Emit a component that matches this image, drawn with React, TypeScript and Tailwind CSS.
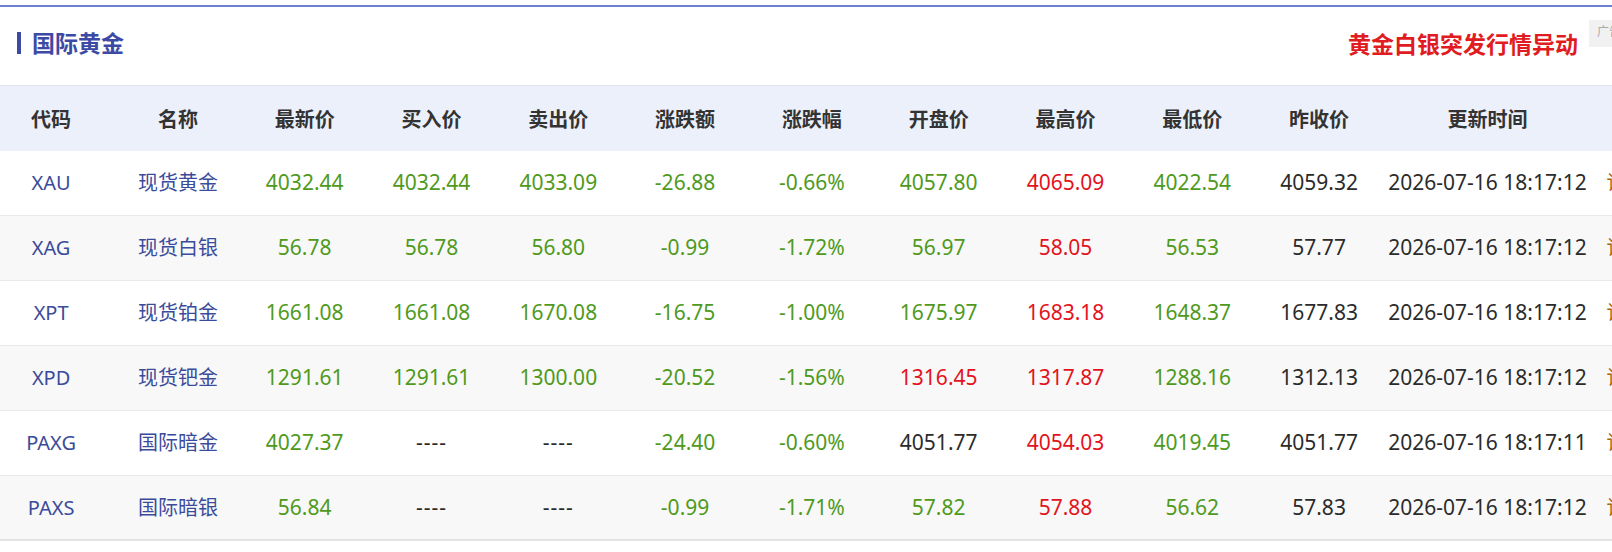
type Tone = "g" | "r" | "k"

type Quote = {
  code: string
  name: string
  cells: [string, Tone][]
  time: string
}

const G: Tone = "g"
const R: Tone = "r"
const K: Tone = "k"

const quotes: Quote[] = [
  {
    code: "XAU",
    name: "现货黄金",
    cells: [["4032.44", G], ["4032.44", G], ["4033.09", G], ["-26.88", G], ["-0.66%", G], ["4057.80", G], ["4065.09", R], ["4022.54", G], ["4059.32", K]],
    time: "2026-07-16 18:17:12",
  },
  {
    code: "XAG",
    name: "现货白银",
    cells: [["56.78", G], ["56.78", G], ["56.80", G], ["-0.99", G], ["-1.72%", G], ["56.97", G], ["58.05", R], ["56.53", G], ["57.77", K]],
    time: "2026-07-16 18:17:12",
  },
  {
    code: "XPT",
    name: "现货铂金",
    cells: [["1661.08", G], ["1661.08", G], ["1670.08", G], ["-16.75", G], ["-1.00%", G], ["1675.97", G], ["1683.18", R], ["1648.37", G], ["1677.83", K]],
    time: "2026-07-16 18:17:12",
  },
  {
    code: "XPD",
    name: "现货钯金",
    cells: [["1291.61", G], ["1291.61", G], ["1300.00", G], ["-20.52", G], ["-1.56%", G], ["1316.45", R], ["1317.87", R], ["1288.16", G], ["1312.13", K]],
    time: "2026-07-16 18:17:12",
  },
  {
    code: "PAXG",
    name: "国际暗金",
    cells: [["4027.37", G], ["----", K], ["----", K], ["-24.40", G], ["-0.60%", G], ["4051.77", K], ["4054.03", R], ["4019.45", G], ["4051.77", K]],
    time: "2026-07-16 18:17:11",
  },
  {
    code: "PAXS",
    name: "国际暗银",
    cells: [["56.84", G], ["----", K], ["----", K], ["-0.99", G], ["-1.71%", G], ["57.82", G], ["57.88", R], ["56.62", G], ["57.83", K]],
    time: "2026-07-16 18:17:12",
  },
]

const heads = ["代码", "名称", "最新价", "买入价", "卖出价", "涨跌额", "涨跌幅", "开盘价", "最高价", "最低价", "昨收价", "更新时间", "操作"]

const toneClass: Record<Tone, string> = {
  g: "text-[#4f9a1c]",
  r: "text-[#e3131e]",
  k: "text-[#2b2b2b]",
}

// columns are centred, table is a touch wider than the viewport
const cols = "grid grid-cols-[repeat(11,126.8px)_210px_100px] -ml-[12.3px] h-full items-center text-center"

export default function App() {
  return (
    <div className="w-[1612px] h-[552px] overflow-hidden bg-white font-['Noto_Sans','Noto_Sans_CJK_SC',sans-serif]">
      <div className="mt-[5px] border-t-2 border-[#6b7fd7]">
        {/* title bar */}
        <div className="flex justify-between items-start h-[78px]">
          <div className="flex items-center mt-[24px] ml-[17px]">
            <div className="w-[4px] h-[22px] bg-[#3c4aa6]" />
            <div className="ml-[11px] text-[23px] font-bold leading-[23px] text-[#3c4aa6] font-['Noto_Sans_CJK_SC',sans-serif]">国际黄金</div>
          </div>
          <div className="flex items-start">
            <a className="mt-[25px] text-[23px] font-bold leading-[23px] text-[#e11b22] font-['Noto_Sans_CJK_SC',sans-serif] cursor-pointer">黄金白银突发行情异动</a>
            <div className="ml-[11px] mt-[13px] w-[23px] h-[27px] bg-[#f1f1f1] overflow-hidden whitespace-nowrap pl-[8px] pt-[3px] text-[12px] text-[#aaaaaa]">广告</div>
          </div>
        </div>

        {/* header */}
        <div className="h-[66px] border-t border-[#dfe3ee] bg-[#ecf0fb] overflow-hidden">
          <div className={cols}>
            {heads.map((h) => (
              <div key={h} className="text-[20px] font-bold text-[#333333] font-['Noto_Sans_CJK_SC',sans-serif] whitespace-nowrap">
                {h}
              </div>
            ))}
          </div>
        </div>

        {/* rows */}
        {quotes.map((q, i) => (
          <div
            key={q.code}
            className={`h-[65px] border-b overflow-hidden ${i % 2 ? "bg-[#f8f8f8]" : "bg-white"} ${i === quotes.length - 1 ? "border-b-2 border-[#e3e3e3]" : "border-[#e9e9e9]"}`}
          >
            <div className={`${cols} text-[21px]`}>
              <div className="text-[20px] text-[#3b4b9b]">{q.code}</div>
              <div className="text-[20px] text-[#3b4b9b]">{q.name}</div>
              {q.cells.map(([v, t], j) => (
                <div key={j} className={`${toneClass[t]} ${v === "----" ? "tracking-[1px]" : ""}`}>
                  {v}
                </div>
              ))}
              <div className="text-[#2b2b2b] whitespace-nowrap">{q.time}</div>
              <div className="text-left pl-[14px] text-[20px] text-[#a8650e] whitespace-nowrap">详情</div>
            </div>
          </div>
        ))}
      </div>
    </div>
  )
}
